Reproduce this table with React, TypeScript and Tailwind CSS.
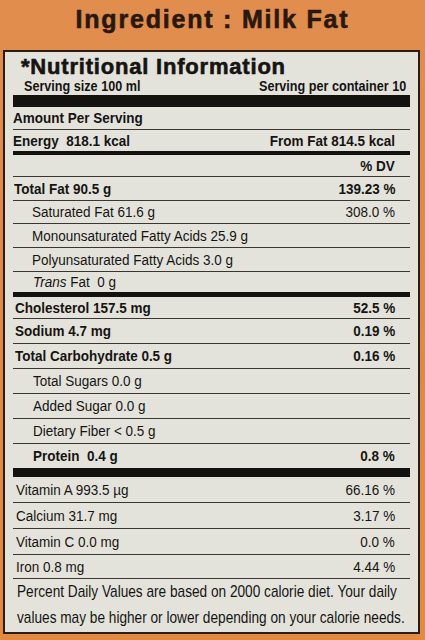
import React from 'react';

type Row = {
    label: React.ReactNode;
    value?: string;
    h: number;
    indent: number;
    bold?: boolean;
    boldValue?: boolean;
    rule?: 'thin' | number;
};

const rows: Row[] = [
    { label: 'Amount Per Serving', h: 22, indent: 0, bold: true, rule: 'thin' },
    { label: 'Energy  818.1 kcal', value: 'From Fat 814.5 kcal', h: 21, indent: 0, bold: true, boldValue: true, rule: 4 },
    { label: '', value: '% DV', h: 21, indent: 0, boldValue: true, rule: 'thin' },
    { label: 'Total Fat 90.5 g', value: '139.23 %', h: 23, indent: 1, bold: true, boldValue: true, rule: 'thin' },
    { label: 'Saturated Fat 61.6 g', value: '308.0 %', h: 22, indent: 19, rule: 'thin' },
    { label: 'Monounsaturated Fatty Acids 25.9 g', h: 23, indent: 19, rule: 'thin' },
    { label: 'Polyunsaturated Fatty Acids 3.0 g', h: 23, indent: 19, rule: 'thin' },
    {
        label: (
            <>
                <i>Trans</i> Fat  0 g
            </>
        ),
        h: 20,
        indent: 20,
        rule: 5,
    },
    { label: 'Cholesterol 157.5 mg', value: '52.5 %', h: 21, indent: 2, bold: true, boldValue: true, rule: 'thin' },
    { label: 'Sodium 4.7 mg', value: '0.19 %', h: 24, indent: 2, bold: true, boldValue: true, rule: 'thin' },
    { label: 'Total Carbohydrate 0.5 g', value: '0.16 %', h: 24, indent: 2, bold: true, boldValue: true, rule: 'thin' },
    { label: 'Total Sugars 0.0 g', h: 24, indent: 20, rule: 'thin' },
    { label: 'Added Sugar 0.0 g', h: 24, indent: 20, rule: 'thin' },
    { label: 'Dietary Fiber < 0.5 g', h: 24, indent: 20, rule: 'thin' },
    { label: 'Protein  0.4 g', value: '0.8 %', h: 24, indent: 20, bold: true, boldValue: true, rule: 9 },
    { label: 'Vitamin A 993.5 µg', value: '66.16 %', h: 25, indent: 3, rule: 'thin' },
    { label: 'Calcium 31.7 mg', value: '3.17 %', h: 25, indent: 3, rule: 'thin' },
    { label: 'Vitamin C 0.0 mg', value: '0.0 %', h: 25, indent: 3, rule: 'thin' },
    { label: 'Iron 0.8 mg', value: '4.44 %', h: 23, indent: 3, rule: 'thin' },
];

// the label print is a condensed face, so squeeze Liberation Sans horizontally
const NutritionRow: React.FC<{ row: Row }> = ({ row }) => (
    <>
        <div
            className="flex items-center justify-between pr-[15px] text-[15.5px] whitespace-pre"
            style={{ height: row.h, paddingLeft: row.indent }}
        >
            <span className={`inline-block origin-left scale-x-[0.87] ${row.bold ? 'font-bold' : ''}`}>{row.label}</span>
            {row.value && (
                <span className={`inline-block origin-right scale-x-[0.87] ${row.boldValue ? 'font-bold' : ''}`}>{row.value}</span>
            )}
        </div>
        {row.rule === 'thin' ? (
            <div className="h-px bg-[#3a3733]"></div>
        ) : (
            <div className="bg-[#141210]" style={{ height: row.rule }}></div>
        )}
    </>
);

export default function App() {
    return (
        <div className="w-[425px] h-[640px] overflow-hidden bg-gradient-to-b from-[#e08d4d] via-[#dd8a48] to-[#e38a3e] font-['Liberation_Sans',Arial,sans-serif] text-[#161412]">
            <header className="h-[50px] flex items-start justify-center pt-[5px]">
                <h1 className="text-[25px] leading-[29px] font-bold tracking-[1.8px] text-[#2a1810] [-webkit-text-stroke:0.6px_#2a1810]">
                    Ingredient : Milk Fat
                </h1>
            </header>

            <div className="ml-[3px] mr-[5px] h-[584px] border-2 border-[#2a1d16] bg-[#e3e3dc] px-[8px]">
                <div className="h-[26px] pt-[2px] pl-[8px] text-[22px] leading-[26px] font-bold tracking-[0.8px] [-webkit-text-stroke:0.6px_#161412]">
                    *Nutritional Information
                </div>
                <div className="h-[17px] flex items-center justify-between pl-[11px] pr-[4px] text-[14.5px] leading-[17px] font-bold">
                    <span className="inline-block origin-left scale-x-[0.87]">Serving size 100 ml</span>
                    <span className="inline-block origin-right scale-x-[0.87]">Serving per container 10</span>
                </div>
                <div className="h-[12px] bg-[#141210]"></div>

                {rows.map((row, i) => (
                    <NutritionRow key={i} row={row} />
                ))}

                <p className="pl-[4px] text-[15.7px] leading-[26px] whitespace-nowrap">
                    <span className="block origin-left scale-x-[0.87]">Percent Daily Values are based on 2000 calorie diet. Your daily</span>
                    <span className="block origin-left scale-x-[0.87]">values may be higher or lower depending on your calorie needs.</span>
                </p>
            </div>
        </div>
    );
}
